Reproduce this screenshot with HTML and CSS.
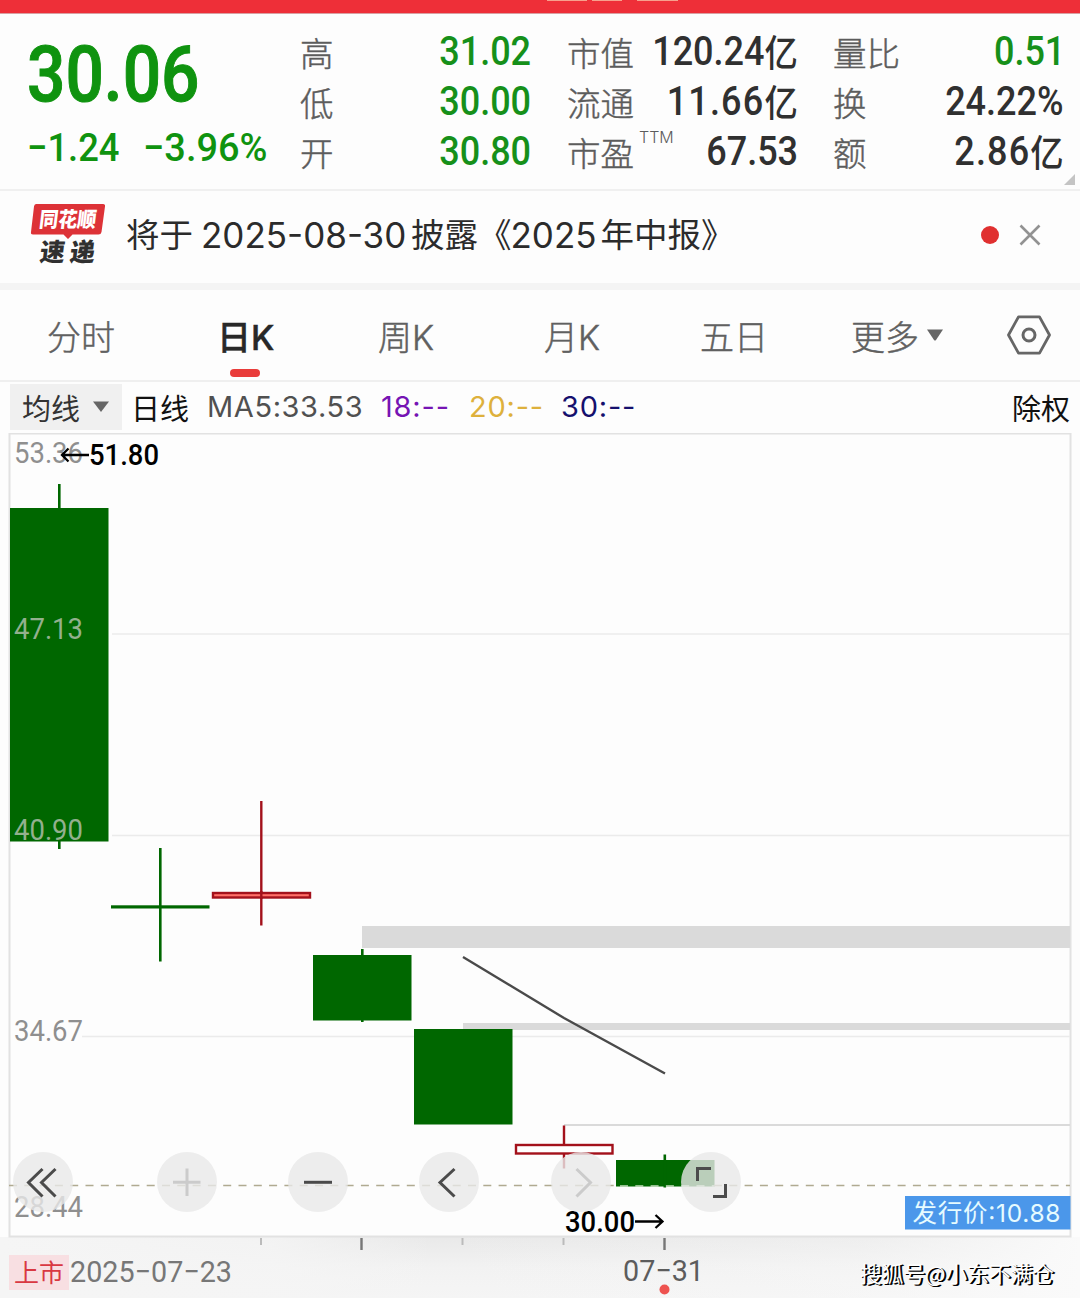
FILE: index.html
```html
<!DOCTYPE html>
<html lang="zh-CN">
<head>
<meta charset="utf-8">
<title>日K</title>
<link rel="stylesheet" href="styles.css">
</head>
<body>
<div class="topbar"><i class="scrap s1"></i><i class="scrap s2"></i><i class="scrap s3"></i></div>

<section class="quote">
  <div class="main">
    <div class="price"><span class="num">30.06</span></div>
    <div class="change"><span class="num delta">−1.24</span><span class="num pct">−3.96%</span></div>
  </div>
  <dl class="stats">
    <div><dt>高</dt><dd class="down">31.02</dd></div>
    <div><dt>低</dt><dd class="down">30.00</dd></div>
    <div><dt>开</dt><dd class="down">30.80</dd></div>
  </dl>
  <dl class="stats">
    <div><dt>市值</dt><dd>120.24<b>亿</b></dd></div>
    <div><dt>流通</dt><dd class="wide">11.66<b>亿</b></dd></div>
    <div><dt class="ttm">市盈<sup>TTM</sup></dt><dd>67.53</dd></div>
  </dl>
  <dl class="stats">
    <div><dt>量比</dt><dd class="down">0.51</dd></div>
    <div><dt>换</dt><dd>24.22%</dd></div>
    <div><dt>额</dt><dd class="wide">2.86<b>亿</b></dd></div>
  </dl>
  <i class="corner"></i>
</section>

<section class="notice">
  <svg class="logo" width="76" height="68" viewBox="30 202 76 68">
    <path d="M36 205H103Q105.500 205 105 207.500L101.500 233Q101 235.500 98.500 235.500H72.500L68 240L63.500 235.500H33Q30.500 235.500 31 233L34 207.500Q34.300 205 36 205Z" fill="#dd3237"/>
    <g transform="translate(0 228) skewX(-7)"><text class="logo-top" x="38.500" y="0" textLength="57" lengthAdjust="spacingAndGlyphs">同花顺</text></g>
    <g transform="translate(0 262) skewX(-7)"><text class="logo-bottom" x="39" y="0" textLength="55" lengthAdjust="spacing">速递</text></g>
  </svg>
  <p><span>将于</span><span class="date">2025-08-30</span><span>披露</span><span class="open">《</span><span class="year">2025</span><span>年中报》</span></p>
  <i class="dot"></i>
  <svg width="22" height="22" viewBox="0 0 22 22"><path d="M1.500 1.500L20.500 20.500M20.500 1.500L1.500 20.500" stroke="#929292" stroke-width="2.600"/></svg>
</section>

<nav class="tabs">
  <span class="t1">分时</span>
  <span class="t2 active">日K</span>
  <span class="t3">周K</span>
  <span class="t4">月K</span>
  <span class="t5">五日</span>
  <span class="t6">更多<svg width="16" height="12" viewBox="0 0 16 12"><path d="M0 0.500H16L9 11Q8 12 7 11Z" fill="#666"/></svg></span>
  <svg class="gear" width="44" height="40" viewBox="0 0 44 40"><path d="M11.500 1.800H32.500L42.500 20L32.500 38.200H11.500L1.500 20Z" fill="none" stroke="#666" stroke-width="2.800" stroke-linejoin="round"/><circle cx="22" cy="20" r="6" fill="none" stroke="#666" stroke-width="3"/></svg>
</nav>

<section class="legend">
  <div class="picker">均线<svg width="16" height="11" viewBox="0 0 16 11"><path d="M0 0.500H16L8 11Z" fill="#666"/></svg></div>
  <span class="period">日线</span>
  <span class="ma5">MA5:33.53</span>
  <span class="ma18">18:--</span>
  <span class="ma20">20:--</span>
  <span class="ma30">30:--</span>
  <span class="adjust">除权</span>
</section>

<svg class="chart" width="1080" height="865" viewBox="0 433 1080 865">
  <defs>
    <linearGradient id="axis" x1="0" y1="0" x2="0" y2="1"><stop offset="0" stop-color="#e9e9e9"/><stop offset=".5" stop-color="#f2f2f2"/><stop offset="1" stop-color="#f5f5f5"/></linearGradient>
    <linearGradient id="fade" x1="0" y1="0" x2="1" y2="0"><stop offset="0" stop-color="#f5f5f5"/><stop offset=".25" stop-color="#f5f5f5" stop-opacity=".8"/><stop offset=".4" stop-color="#f5f5f5" stop-opacity="0"/><stop offset=".8" stop-color="#fafafa" stop-opacity=".3"/><stop offset="1" stop-color="#fafafa"/></linearGradient>
  </defs>
  <rect x="0" y="1237" width="1080" height="61" fill="url(#axis)"/>
  <rect x="0" y="1237" width="1080" height="61" fill="url(#fade)"/>
  <rect class="frame" x="9.500" y="433.500" width="1061" height="803"/>
  <path class="grid" d="M112 634H1070M112 835.500H1070M82 1036.500H1070"/>
  <g class="gaps"><rect x="362" y="926" width="708" height="22"/><rect x="463" y="1023" width="607" height="7"/><rect x="564" y="1124" width="506" height="2"/></g>

  <g class="fall">
    <rect x="10" y="508" width="98.500" height="333.500"/><rect x="58" y="484" width="2.600" height="365"/>
    <rect x="111" y="905.300" width="98.500" height="3.200"/><rect x="159" y="848" width="2.600" height="113.500"/>
    <rect x="313" y="955" width="98.500" height="65.500"/><rect x="361" y="949" width="2.600" height="73"/>
    <rect x="414" y="1029" width="98.500" height="95.500"/>
    <rect x="616" y="1160" width="98.500" height="26.500"/><rect x="663.500" y="1154.500" width="2.600" height="33"/>
  </g>
  <g class="rise">
    <path d="M261.300 801V925.500"/><rect x="213" y="893" width="97" height="4.500" fill="#ff7068"/><path d="M261.300 891V899"/>
    <path d="M564 1125.500V1144M564 1154V1168.500"/><rect x="516" y="1145" width="96.500" height="8.500" fill="#fff"/>
  </g>
  <path d="M463 957L564 1018L665 1073.500" fill="none" stroke="#4a4a4a" stroke-width="2.400"/>
  <path d="M9 1185.500H616M714 1185.500H1070" stroke="#b0aa91" stroke-width="1.500" stroke-dasharray="8 7.300"/>
  <path d="M620 1186H714" stroke="#c6dfc0" stroke-width="1.600" stroke-dasharray="8 7.300"/>

  <g class="scale">
    <text x="14" y="463" textLength="69" lengthAdjust="spacingAndGlyphs">53.36</text>
    <text x="14" y="639" textLength="69" lengthAdjust="spacingAndGlyphs" class="on">47.13</text>
    <text x="14" y="840" textLength="69" lengthAdjust="spacingAndGlyphs" class="on">40.90</text>
    <text x="14" y="1041" textLength="69" lengthAdjust="spacingAndGlyphs">34.67</text>
    <text x="14" y="1217" textLength="69" lengthAdjust="spacingAndGlyphs">28.44</text>
  </g>
  <g class="marks">
    <text x="89" y="465" textLength="70" lengthAdjust="spacingAndGlyphs">51.80</text>
    <text x="565" y="1232" textLength="70" lengthAdjust="spacingAndGlyphs">30.00</text>
    <path d="M89 455H62M68.500 448.500L62 455L68.500 461.500M635 1221.500H662M655.500 1215L662.500 1221.500L655.500 1228"/>
  </g>

  <g class="buttons">
    <circle cx="43" cy="1182" r="30"/><circle cx="187" cy="1182" r="30"/><circle cx="318" cy="1182" r="30"/><circle cx="449" cy="1182" r="30"/><circle cx="581" cy="1182" r="30"/><circle cx="711" cy="1182" r="30"/>
  </g>
  <g class="icons">
    <path d="M42.500 1169L28.500 1182.500L42.500 1196.500M55.500 1169L41.500 1182.500L55.500 1196.500"/>
    <path class="off" d="M173 1182.300H200.500M187 1168.500V1196"/>
    <path d="M304 1182.300H332"/>
    <path d="M454.500 1169L440 1182.500L454.500 1196.500"/>
    <path class="off" d="M576.500 1169L590.500 1182.500L576.500 1196.500"/>
    <path d="M697.500 1181V1168.500H711M713 1196.500H725.500V1184"/>
  </g>

  <g class="issue"><rect x="905" y="1196" width="165.500" height="33.500"/><text x="912.500" y="1222" textLength="148" lengthAdjust="spacing">发行价:10.88</text></g>
  <path d="M261 1238V1245M462.500 1238V1245M563.500 1238V1245" stroke="#bbb" stroke-width="2"/>
  <path d="M361.500 1238V1250M664.500 1238V1250" stroke="#777" stroke-width="2.400"/>
  <rect x="9" y="1255" width="60" height="35" fill="#f8dfe2"/>
  <text class="listed" x="14" y="1282">上市</text>
  <text class="day" x="70" y="1282" textLength="162" lengthAdjust="spacingAndGlyphs">2025−07−23</text>
  <text class="day dark" x="623" y="1281" textLength="81" lengthAdjust="spacingAndGlyphs">07−31</text>
  <circle cx="664.500" cy="1289.500" r="5" fill="#ee5350"/>
</svg>
<div class="credit">搜狐号@小东不满仓</div>
</body>
</html>
```
FILE: styles.css
```css
* { box-sizing: border-box; }
body { position: relative; margin: 0; width: 1080px; height: 1298px; overflow: hidden; background: #fdfdfd; font-family: Inter, "Noto Sans CJK SC", sans-serif; color: #303030; }
p, dl, dd { margin: 0; }
svg { flex: none; display: block; }

.topbar { position: relative; height: 14px; background: #ee2f38; border-bottom: 1px solid #d9a0a2; }
.scrap { position: absolute; top: 0; height: 1px; background: #f7a08c; }
.s1 { left: 547px; width: 40px; }
.s2 { left: 592px; width: 30px; }
.s3 { left: 637px; width: 41px; }

.quote { position: relative; display: grid; grid-template-columns: 272px 230px 230px 230px; height: 177px; padding: 13px 0 0 28px; border-bottom: 2px solid #f0f0f0; }
.quote .stats:nth-child(3) { margin-left: 37px; margin-right: -38px; }
.quote .stats:nth-child(4) { margin-left: 73px; margin-right: -74px; }
.main { color: #0f930f; font-family: Roboto, sans-serif; font-weight: 500; }
.num { display: inline-block; transform-origin: left center; white-space: nowrap; }
.price { height: 96px; line-height: 97px; font-size: 77px; }
.price .num { transform: translateX(-1px) scaleX(.878); -webkit-text-stroke: 1px #0f930f; }
.change { display: flex; height: 50px; line-height: 50px; font-size: 39.500px; }
.delta { width: 116px; transform: translateX(-1px) scaleX(.92); }
.pct { transform: translateX(-1px) scaleX(.96); }
.stats > div { display: flex; justify-content: space-between; height: 50px; line-height: 50px; }
.stats dt { font: 300 33.500px/50px "Noto Sans CJK SC", sans-serif; color: #5c5c5c; -webkit-text-stroke: .45px #5c5c5c; white-space: nowrap; }
.stats dd { font: 500 40px/50px Roboto, sans-serif; color: #303030; white-space: nowrap; transform: scaleX(.9); transform-origin: right center; }
.stats dd.wide { letter-spacing: 1.300px; margin-right: -1px; }
.stats b { display: inline-block; font: 500 37px/48px "Noto Sans CJK SC", sans-serif; vertical-align: top; }
.stats dd.down { color: #16901a; margin-right: -1px; }
.ttm { display: flex; }
.ttm sup { margin-left: 5px; font: 300 16px/20px Inter, sans-serif; -webkit-text-stroke: 0; }
.corner { position: absolute; right: 5px; bottom: 4px; border-style: solid; border-width: 0 0 11px 11px; border-color: transparent transparent #c4c4c4; }

.notice { display: flex; align-items: center; height: 99px; padding: 0 39px 4px 30px; border-bottom: 7px solid #f4f4f4; }
.logo-top { font: 900 21px "Noto Sans CJK SC", sans-serif; fill: #fff; }
.logo-bottom { font: 900 25px "Noto Sans CJK SC", sans-serif; fill: #303030; }
.notice p { display: flex; flex: 1; margin-left: 20px; font-size: 33.500px; line-height: 50px; white-space: nowrap; color: #2b2b2b; }
.notice .date { margin: 0 5px 0 8px; width: 205px; font-size: 35px; }
.notice .year { margin: 0 4px 0 -1px; font-size: 35px; }
.dot { width: 18px; height: 18px; margin-right: 20px; border-radius: 50%; background: #e03030; }

.tabs { display: flex; align-items: center; height: 92px; padding: 0 29px 0 47px; border-bottom: 2px solid #efefef; font-size: 34px; font-weight: 300; color: #606060; white-space: nowrap; -webkit-text-stroke: .45px; }
.t1 { width: 171px; }
.t2 { width: 160px; }
.t3 { width: 166px; }
.t4 { width: 156px; }
.t5 { width: 151px; }
.t6 { display: flex; align-items: center; gap: 8px; flex: 1; }
.active { position: relative; left: -1px; color: #282828; font-weight: 500; }
.active::after { content: ""; position: absolute; left: 13px; top: 58px; width: 30px; height: 8px; border-radius: 4px; background: #e93c3a; }

.legend { display: flex; align-items: center; height: 51px; padding: 0 10px 2px; font-size: 29px; color: #111; white-space: nowrap; }
.picker { display: flex; align-items: center; width: 112px; height: 46px; padding-left: 12px; gap: 13px; background: #f0f0f0; color: #333; }
.period { width: 85px; padding-left: 9px; }
.ma5 { width: 174px; color: #505050; letter-spacing: .6px; }
.ma18 { width: 88px; color: #7614b4; letter-spacing: .8px; }
.ma20 { width: 92px; color: #deb13c; letter-spacing: .8px; }
.ma30 { color: #15106d; letter-spacing: .8px; }
.adjust { margin-left: auto; }

.frame { fill: none; stroke: #e2e2e2; stroke-width: 2; }
.grid { stroke: #ebebeb; stroke-width: 1.500; fill: none; }
.gaps { fill: #dadada; }
.fall { fill: #006700; }
.rise { stroke: #a3111b; stroke-width: 2.400; }
.scale text { font: 400 30px Roboto, sans-serif; fill: #8f8f8f; }
.scale .on { fill: #93b08e; }
.marks text { font: 500 29.500px Roboto, sans-serif; fill: #000; }
.marks path { fill: none; stroke: #000; stroke-width: 2.300; }
.buttons { fill: #e8e8e8; fill-opacity: .8; }
.icons { fill: none; stroke: #4b4b4b; stroke-width: 3; }
.icons .off { stroke: #cbcbcb; }
.issue rect { fill: #4b97ea; }
.issue text { font: 400 24.500px Inter, "Noto Sans CJK SC", sans-serif; fill: #e6fbff; }
.listed { font: 400 25px "Noto Sans CJK SC", sans-serif; fill: #d93842; }
.day { font: 400 30px Roboto, sans-serif; fill: #777; }
.dark { fill: #5c5c5c; }
.credit { position: absolute; left: 860px; top: 1257px; font: 400 21.700px/32px "Noto Sans CJK SC", sans-serif; white-space: nowrap; color: #fff; text-shadow: 1px 1px 0 #000, 2px 1px 0 #000; }
```
